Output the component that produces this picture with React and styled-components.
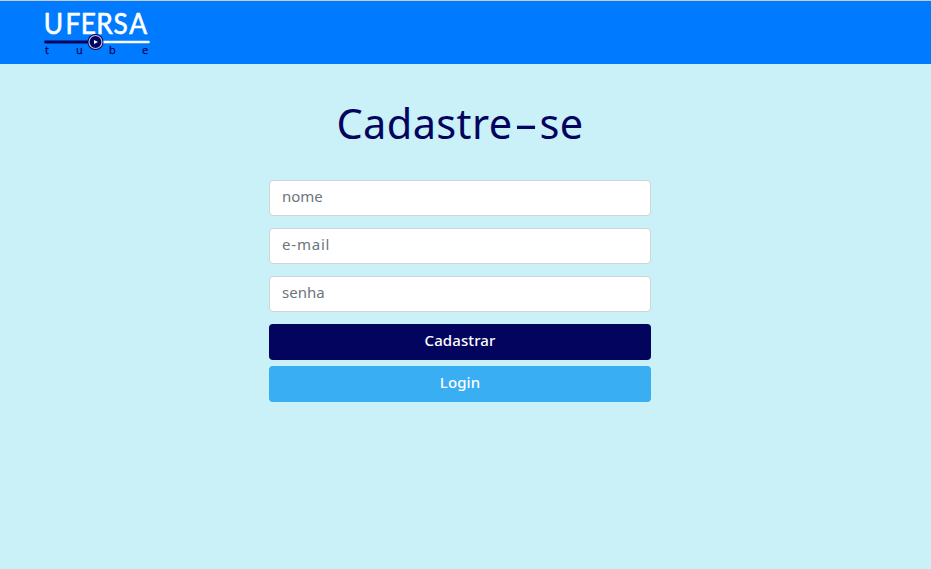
import React from "react";
import styled, { createGlobalStyle } from "styled-components";

const GlobalStyle = createGlobalStyle`
  *, *::before, *::after { box-sizing: border-box; }
  body {
    margin: 0;
    min-height: 100vh;
    background: #caf0f8;
    font-family: "Noto Sans", "Open Sans", sans-serif;
    font-size: 15px;
  }
`;

const Navbar = styled.header`
  display: flex;
  align-items: flex-start;
  height: 64px;
  padding: 0 40px;
  border-top: 1px solid #c3cfdc;
  background: #007bff;
`;

const Logo = styled.svg`
  display: block;
  width: 115px;
  height: 57px;
`;

const Main = styled.main`
  display: flex;
  flex-direction: column;
  align-items: center;
  width: 382px;
  margin-left: 269px;
  padding-top: 29px;
`;

const Title = styled.h1`
  display: flex;
  align-items: center;
  height: 60px;
  margin: 0 0 27px;
  color: #03045e;
  font-size: 41.5px;
  font-weight: 400;
  line-height: 60px;
  letter-spacing: 0.4px;
  white-space: nowrap;
`;

const Hyphen = styled.span`
  display: inline-block;
  width: 27px;
  text-align: center;
  transform: scaleX(1.8);
`;

const Form = styled.form`
  display: flex;
  flex-direction: column;
  width: 100%;
`;

const Field = styled.input`
  height: 36px;
  margin: 0 0 12px;
  padding: 4px 12px 8px;
  border: 1px solid #ced4da;
  border-radius: 4px;
  background: #fff;
  color: #495057;
  font: inherit;
  letter-spacing: ${(p) => p.$tracking || "0"};
  &::placeholder { color: #6c757d; opacity: 1; }
`;

const Button = styled.button`
  height: 36px;
  margin: 0 0 6px;
  padding: 0 12px 4px;
  border: 0;
  border-radius: 4px;
  background: ${(p) => (p.$primary ? "#03045e" : "#39aef2")};
  color: #fff;
  font: inherit;
  font-weight: 500;
  letter-spacing: 0.1px;
`;

function UfersaLogo() {
  return (
    <Logo viewBox="0 -7 115 57" role="img" aria-label="UFERSA tube">
      <text transform="scale(0.92 1)" x="4.2 27.6 44.4 61.200 79.800 96.900" y="25.600" fill="#fff" stroke="#fff" strokeWidth="0.6" fontFamily="Lato, sans-serif" fontSize="28.600">UFERSA</text>
      <path d="M5.500 34H55" stroke="#03045e" strokeWidth="2.800" strokeLinecap="round" />
      <path d="M60 34H108.500" stroke="#fff" strokeWidth="2.600" strokeLinecap="round" />
      <circle cx="55.500" cy="34" r="8" fill="#03045e" />
      <circle cx="55.500" cy="34" r="6.500" fill="none" stroke="#b9bfe0" strokeWidth="1.200" />
      <path d="M54 31.900L58 34L54 36.100Z" fill="#fff" />
      <g fill="#03045e" stroke="#03045e" strokeWidth="0.250" fontFamily="Open Sans, sans-serif" fontSize="11">
        <text x="5" y="46">t</text>
        <text x="36" y="46">u</text>
        <text x="69" y="46">b</text>
        <text x="102" y="46">e</text>
      </g>
    </Logo>
  );
}

export default function App() {
  return (
    <>
      <GlobalStyle />
      <Navbar><UfersaLogo /></Navbar>
      <Main>
        <Title>Cadastre<Hyphen>-</Hyphen>se</Title>
        <Form onSubmit={(e) => e.preventDefault()}>
          <Field type="text" placeholder="nome" />
          <Field type="email" placeholder="e-mail" $tracking="0.8px" />
          <Field type="password" placeholder="senha" />
          <Button type="submit" $primary>Cadastrar</Button>
          <Button type="button">Login</Button>
        </Form>
      </Main>
    </>
  );
}
